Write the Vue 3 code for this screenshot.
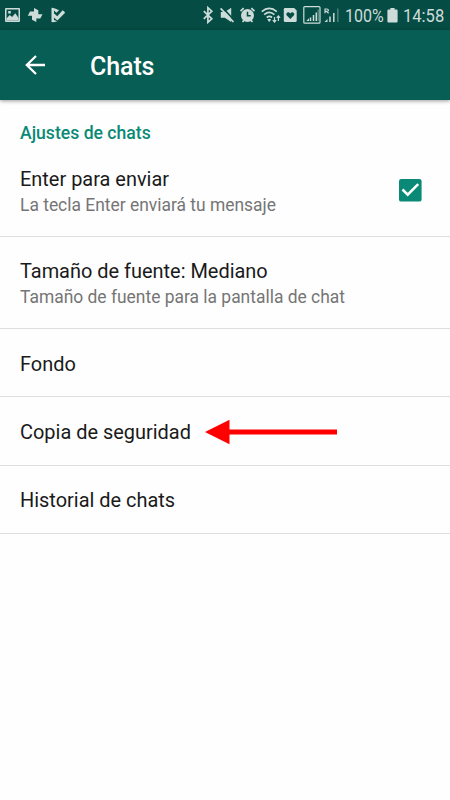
<script setup>
import { ref } from 'vue'

const enterSends = ref(true)
const rows = [
  { title: 'Enter para enviar', note: 'La tecla Enter enviará tu mensaje', check: true },
  { title: 'Tamaño de fuente: Mediano', note: 'Tamaño de fuente para la pantalla de chat' },
  { title: 'Fondo' },
  { title: 'Copia de seguridad', arrow: true },
  { title: 'Historial de chats' },
]
</script>

<template>
  <div class="screen">
    <div class="status">
      <svg class="left" width="70" height="30" viewBox="0 0 70 30">
        <path fill-rule="evenodd" d="M6 8h13q1 0 1 1v12q0 1-1 1H6q-1 0-1-1V9q0-1 1-1zM6.500 9.600v10.800h12V9.600z" />
        <path d="M6.500 20.400v-2l3.300-3.400 2.300 2 3.200-3.700 3.200 4.600v2.500zM8.200 11h2.600v2.400H8.200z" />
        <path d="M34 14.200V8l4.300 2.200v4H42.500l-2.200 4.300h-4V22L32 19.800v-4h-4.200l2.200-4.200h4z" />
        <path d="M51.500 8.400q0-.8.800-.6 3.700.6 6.700 2.400l-2.500 2.500-2.600-2.200.2 2.900 3.200 2.800 5.300-6q2 1 2.500 2.600l-7.700 7.700-3.600-2.900.3 2.400 3.200 1.200q-2.200 1-5.200 1-.6 0-.6-.7z" />
      </svg>
      <svg class="radios" width="146" height="30" viewBox="200 0 146 30">
        <path class="line" d="M203.800 11.200l8 7.600-3.900 3.500V7.700l3.900 3.500-8 7.600" />
        <path d="M220.800 12h4l6.400-4.300v14.400l-6.400-4.300h-4z" />
        <path class="cut" d="M222.300 7.400l12 13" />
        <path class="line" d="M220.600 8.300l12.900 13.700" />
        <circle cx="247.500" cy="15.500" r="6.500" />
        <path class="line" d="M240.500 11.200l3.200-3M254.500 11.200l-3.200-3M242.500 21.800l1.500-1.500M252.500 21.800l-1.500-1.500" />
        <path class="dark" d="M247.500 11.800v4h3.200" />
        <path class="line" d="M261.800 11.700q7.400-6.500 15 0M264.200 14.600q5.200-4.500 10.200 0M266.700 17.500q2.700-2.200 5.300 0" />
        <path d="M267.300 19.400q2-1.400 3.900 0l-2 2.500z" />
        <path class="thin" d="M274.500 17v5M272.800 20.200l1.700 1.900 1.700-1.900M278.400 21v-5M276.700 17.800l1.700-1.900 1.700 1.900" />
        <path d="M285 8h9.200l2.500 2.500v10.200q0 1.300-1.300 1.300H285q-1.200 0-1.200-1.300V9.200Q283.800 8 285 8z" />
        <path class="heart" d="M290.300 19l-3.700-3.700q-1-2.100.8-2.900 1.800-.4 2.900 1.200 1.100-1.600 2.900-1.200 1.800.8.8 2.900z" />
        <rect class="thin" x="303.800" y="6.600" width="16.200" height="16.600" rx="1" />
        <path class="bar" d="M310.500 17.500V21M313.500 15v6M316.300 12.500V21" />
        <path d="M306.300 21l2.700-2.700V21z" />
        <path class="bar faint" d="M318.200 9.500V21" />
        <path class="thin" d="M325 13.300V9h1.800q1.600 0 1.600 1.200t-1.600 1.200H325M326.700 11.500l1.900 1.800" />
        <path d="M324.500 22l3-3v3z" />
        <path class="bar" d="M330 16.500V22M333.800 13v9" />
        <path class="bar faint" d="M337.800 8.500V22" />
      </svg>
      <span class="stat pct">100%</span>
      <svg class="battery" width="11" height="15" viewBox="0 0 11 15">
        <path d="M3.400 0h4.200v1.500H9.500q1.100 0 1.100 1.100v11q0 1-1.100 1h-8q-1.100 0-1.100-1v-11q0-1.100 1.100-1.100h1.900z" />
      </svg>
      <span class="stat clock">14:58</span>
    </div>
    <header class="bar-top">
      <svg class="back" width="22" height="20" viewBox="0 0 22 20">
        <path d="M21 10H3M12 1L2.800 10l9.200 9" />
      </svg>
      <h1>Chats</h1>
    </header>
    <main>
      <h2>Ajustes de chats</h2>
      <section v-for="row in rows" :key="row.title" class="row" :class="{ two: row.note, first: row.check }">
        <div class="texts">
          <div class="title">{{ row.title }}</div>
          <div v-if="row.note" class="note">{{ row.note }}</div>
        </div>
        <svg v-if="row.check && enterSends" class="check" width="23" height="23" viewBox="0 0 23 23">
          <rect width="22.600" height="22.600" rx="2.200" />
          <path d="M3.500 10.500l5.200 5.200L19.200 5.200" />
        </svg>
        <svg v-if="row.arrow" class="arrow" width="133" height="26" viewBox="0 0 133 26">
          <path d="M0 13L24.500.700v9.700H132v5.200H24.500v9.700z" />
        </svg>
      </section>
    </main>
  </div>
</template>

<style>
body {
  margin: 0;
  background: #fefefe;
}
</style>

<style scoped>
.screen {
  width: 450px;
  height: 800px;
  overflow: hidden;
  background: #fefefe;
  font-family: Roboto, sans-serif;
}
.status {
  display: flex;
  align-items: center;
  height: 30px;
  background: #054d44;
  color: #cddbd9;
}
.status svg {
  flex: none;
  fill: #cddbd9;
}
.radios {
  margin-left: 130px;
}
.status .line {
  fill: none;
  stroke: #cddbd9;
  stroke-width: 1.7;
}
.status .thin {
  fill: none;
  stroke: #cddbd9;
  stroke-width: 1.2;
}
.status .dark {
  fill: none;
  stroke: #054d44;
  stroke-width: 1.5;
}
.status .cut {
  stroke: #054d44;
  stroke-width: 1.6;
}
.status .heart {
  fill: #054d44;
}
.status .bar {
  fill: none;
  stroke: #cddbd9;
  stroke-width: 1.5;
}
.status .faint {
  stroke: #4d8079;
}
.stat {
  flex: none;
  font-size: 18px;
  line-height: 30px;
  white-space: nowrap;
  transform-origin: left center;
}
.pct {
  width: 41px;
  margin-left: -1px;
  padding-top: 2px;
  transform: scaleX(0.89);
}
.battery {
  margin-left: 1px;
}
.clock {
  margin-left: 5px;
  padding-top: 2px;
  transform: scaleX(0.92);
}
.bar-top {
  position: relative;
  display: flex;
  align-items: center;
  height: 70px;
  background: #075e54;
  box-shadow: 0 1px 4px rgba(0, 0, 0, 0.4);
}
.back {
  margin-left: 24px;
  fill: none;
  stroke: #fff;
  stroke-width: 2.3;
}
h1 {
  margin: 4px 0 0 44px;
  color: #fff;
  font-size: 25px;
  font-weight: 500;
  line-height: 30px;
  letter-spacing: -0.1px;
}
h2 {
  margin: 0;
  padding: 20px 20px 0;
  color: #0a8a76;
  font-size: 17.6px;
  font-weight: 500;
  line-height: 26px;
}
.row {
  box-sizing: border-box;
  display: flex;
  align-items: center;
  height: 68.3px;
  padding: 0 28.5px 0 20px;
  border-bottom: 1px solid #dedede;
}
.row.two {
  height: 92px;
}
.row.first {
  height: 91px;
}
.texts {
  flex: none;
  padding-top: 3px;
}
.two .texts {
  padding-top: 4px;
}
.first .texts {
  padding-top: 3px;
}
.title {
  color: #1a1a1a;
  font-size: 19.95px;
  line-height: 25px;
}
.note {
  color: #757575;
  font-size: 17.43px;
  line-height: 26px;
}
.check {
  margin: 0 0 1px auto;
}
.check rect {
  fill: #0a8a76;
}
.check path {
  fill: none;
  stroke: #fff;
  stroke-width: 2.5;
}
.arrow {
  margin: 2px 0 0 14px;
  fill: #fe0000;
}
</style>
